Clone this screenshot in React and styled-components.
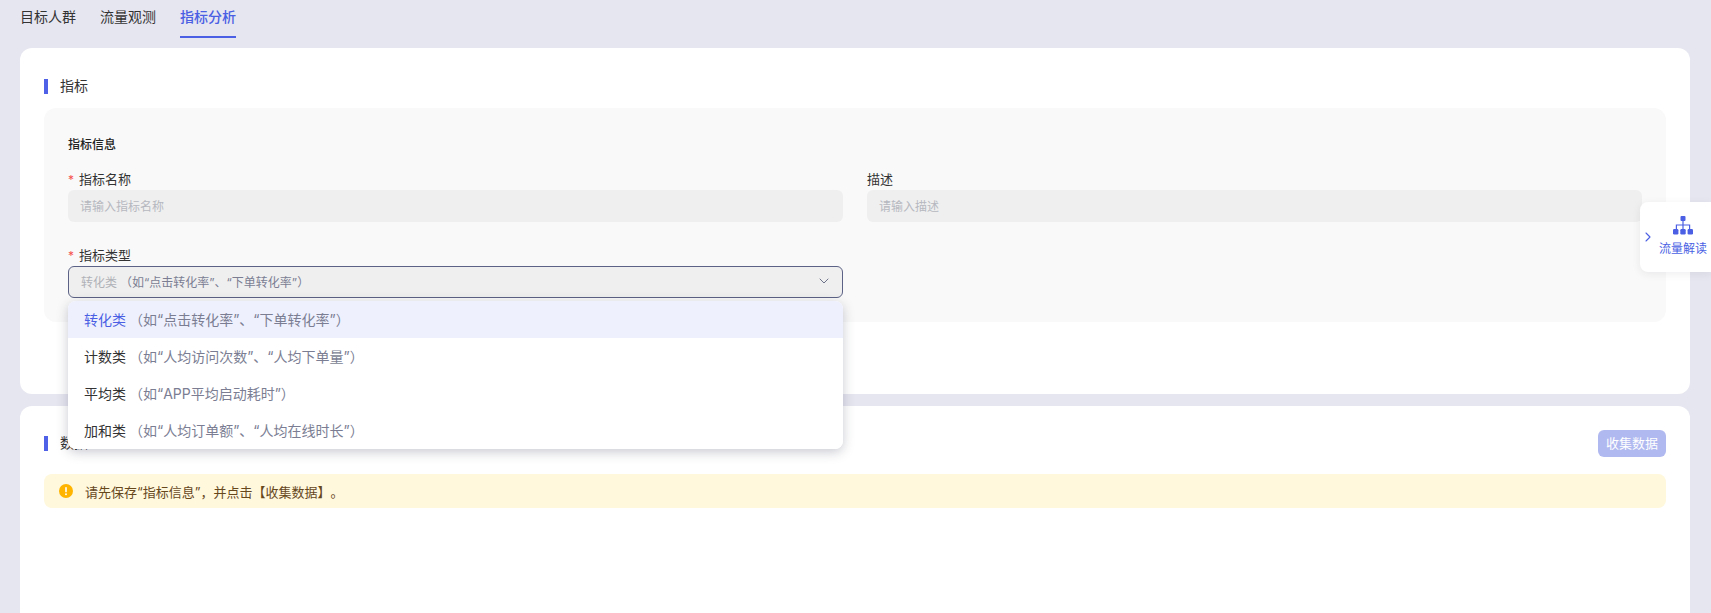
import React from "react";
import styled, {createGlobalStyle} from "styled-components";
import {ChevronDown, ChevronRight} from "lucide-react";


const GlobalStyle = createGlobalStyle`
  html, body {
    margin: 0;
    height: 613px;
    overflow: hidden;
    background: #e6e6f0;
    font-family: Inter, "Noto Sans CJK SC", sans-serif;
    color: #333;
    text-spacing-trim: space-all;
  }
`;

const Page = styled.div`
  position: relative;
  height: 613px;
  overflow: hidden;
  padding: 0 21px 0 20px;
`;

const Tabs = styled.div`
  display: flex;
  gap: 24px;
  height: 38px;
  margin-bottom: 10px;
`;

const Tab = styled.div`
  height: 38px;
  box-sizing: border-box;
  padding-top: 6px;
  font-size: 14px;
  line-height: 22px;
  color: ${props => (props.$active ? "#4a5fe3" : "#333")};
  font-weight: ${props => (props.$active ? 500 : 400)};
  border-bottom: 2px solid ${props => (props.$active ? "#4a5fe3" : "transparent")};
`;

const Card = styled.section`
  background: #fff;
  border-radius: 12px;
  padding: 31px 24px ${props => props.$bottom || 0}px;
  margin-bottom: 12px;
  min-height: ${props => props.$minHeight || 0}px;
`;

const CardHeader = styled.div`
  display: flex;
  align-items: center;
  justify-content: space-between;
  margin-top: -7px;
`;

const SectionTitle = styled.div`
  height: 15px;
  font-size: 14px;
  line-height: 14px;
  color: #333;
  border-left: 4px solid #4f61e6;
  padding-left: 12px;
`;

const Panel = styled.div`
  margin-top: 14px;
  height: 214px;
  box-sizing: border-box;
  padding: 27px 24px 0;
  background: #f9f9f9;
  border-radius: 12px;
`;

const PanelTitle = styled.div`
  font-size: 12px;
  line-height: 20px;
  font-weight: 500;
  color: #222;
  margin-bottom: 14px;
`;

const FormGrid = styled.div`
  display: grid;
  grid-template-columns: 775px 775px;
  column-gap: 24px;
  row-gap: 23px;
`;

const Field = styled.div`
  position: relative;
  min-width: 0;
`;

const Label = styled.label`
  display: block;
  font-size: 13px;
  line-height: 20px;
  height: 21px;
  color: #333;
`;

const Star = styled.span`
  color: #f5534f;
  font-size: 12px;
  display: inline-block;
  width: 11px;
`;

const Input = styled.div`
  height: 32px;
  box-sizing: border-box;
  padding: 0 12px 2px;
  display: flex;
  align-items: center;
  background: #efefef;
  border-radius: 6px;
  font-size: 12px;
  color: #b6b8bf;
`;

const Select = styled(Input)`
  justify-content: space-between;
  border: 1px solid #5c6285;
  padding-right: 10px;
`;

const SelectValue = styled.span`
  display: flex;
  color: #b0b2b8;
`;

const Hint = styled.span`
  color: #7b7e93;
  margin-left: 3px;
`;

const Dropdown = styled.div`
  position: absolute;
  top: 56px;
  left: 0;
  right: 0;
  z-index: 5;
  background: #fff;
  border-radius: 8px;
  overflow: hidden;
  box-shadow: 0 3px 12px rgba(40, 44, 70, 0.25);
`;

const Option = styled.div`
  display: flex;
  align-items: center;
  height: 37px;
  box-sizing: border-box;
  padding: 0 0 2px 16px;
  font-size: 14px;
  color: ${props => (props.$active ? "#4a5fe3" : "#333")};
  background: ${props => (props.$active ? "#eef0fd" : "#fff")};
`;

const CollectButton = styled.button`
  width: 68px;
  height: 27px;
  padding: 0 0 2px;
  border: 0;
  border-radius: 6px;
  background: #b0b9f0;
  color: #fff;
  font-family: inherit;
  font-size: 13px;
`;

const Alert = styled.div`
  display: flex;
  align-items: center;
  gap: 12px;
  height: 34px;
  margin-top: 17px;
  padding-left: 15px;
  border-radius: 8px;
  background: #fff8dc;
  font-size: 13px;
  color: #66471c;
`;

const SideTab = styled.div`
  position: absolute;
  top: 202px;
  right: 0;
  width: 71px;
  height: 70px;
  box-sizing: border-box;
  display: flex;
  align-items: center;
  background: #fff;
  border-radius: 8px 0 0 8px;
  box-shadow: 0 2px 8px rgba(40, 44, 70, 0.08);
  color: #4a5fe3;
  z-index: 6;
`;

const SideArrow = styled.div`
  display: flex;
  width: 18px;
`;

const SideContent = styled.div`
  display: flex;
  flex-direction: column;
  align-items: center;
  gap: 5px;
  font-size: 12px;
  line-height: 17px;
  margin-left: 1px;
  margin-top: -2px;
`;

const options = [
    {name: "转化类", hint: "（如“点击转化率”、“下单转化率”）"},
    {name: "计数类", hint: "（如“人均访问次数”、“人均下单量”）"},
    {name: "平均类", hint: "（如“APP平均启动耗时”）"},
    {name: "加和类", hint: "（如“人均订单额”、“人均在线时长”）"},
];

const OrgIcon = () => (
    <svg width="20" height="19" viewBox="0 0 20 19" fill="#4a5fe3">
        <rect x="7.5" y="0" width="5" height="5" rx="1"/>
        <rect x="0" y="13" width="5.4" height="5.4" rx="1.2"/>
        <rect x="7.3" y="13" width="5.4" height="5.4" rx="1.2"/>
        <rect x="14.6" y="13" width="5.4" height="5.4" rx="1.2"/>
        <path d="M9.4 5h1.2v3.4h6.6V13H16V9.6h-5.4V13H9.4V9.6H4V13H2.8V8.4h6.6z"/>
    </svg>
);

const WarnIcon = () => (
    <svg width="14" height="14" viewBox="0 0 14 14">
        <circle cx="7" cy="7" r="7" fill="#ffb400"/>
        <rect x="6.2" y="3" width="1.6" height="5.4" rx="0.8" fill="#fff"/>
        <circle cx="7" cy="10.2" r="0.95" fill="#fff"/>
    </svg>
);

const App = () => {
    return (
        <Page>
            <GlobalStyle/>

            <Tabs>
                <Tab>目标人群</Tab>
                <Tab>流量观测</Tab>
                <Tab $active>指标分析</Tab>
            </Tabs>

            <Card $bottom={72}>
                <SectionTitle>指标</SectionTitle>
                <Panel>
                    <PanelTitle>指标信息</PanelTitle>
                    <FormGrid>
                        <Field>
                            <Label><Star>*</Star>指标名称</Label>
                            <Input>请输入指标名称</Input>
                        </Field>
                        <Field>
                            <Label>描述</Label>
                            <Input>请输入描述</Input>
                        </Field>
                        <Field>
                            <Label><Star>*</Star>指标类型</Label>
                            <Select>
                                <SelectValue>
                                    转化类
                                    <Hint>{options[0].hint}</Hint>
                                </SelectValue>
                                <ChevronDown size={16} color="#6d7288" strokeWidth={1.5}/>
                            </Select>
                            <Dropdown>
                                {options.map((option, index) => (
                                    <Option key={option.name} $active={index === 0}>
                                        {option.name}
                                        <Hint>{option.hint}</Hint>
                                    </Option>
                                ))}
                            </Dropdown>
                        </Field>
                    </FormGrid>
                </Panel>
            </Card>

            <Card $minHeight={300}>
                <CardHeader>
                    <SectionTitle>数据</SectionTitle>
                    <CollectButton>收集数据</CollectButton>
                </CardHeader>
                <Alert>
                    <WarnIcon/>
                    请先保存“指标信息”，并点击【收集数据】。
                </Alert>
            </Card>

            <SideTab>
                <SideArrow><ChevronRight size={16} strokeWidth={1.6}/></SideArrow>
                <SideContent>
                    <OrgIcon/>
                    流量解读
                </SideContent>
            </SideTab>
        </Page>
    );
};


export default App;
